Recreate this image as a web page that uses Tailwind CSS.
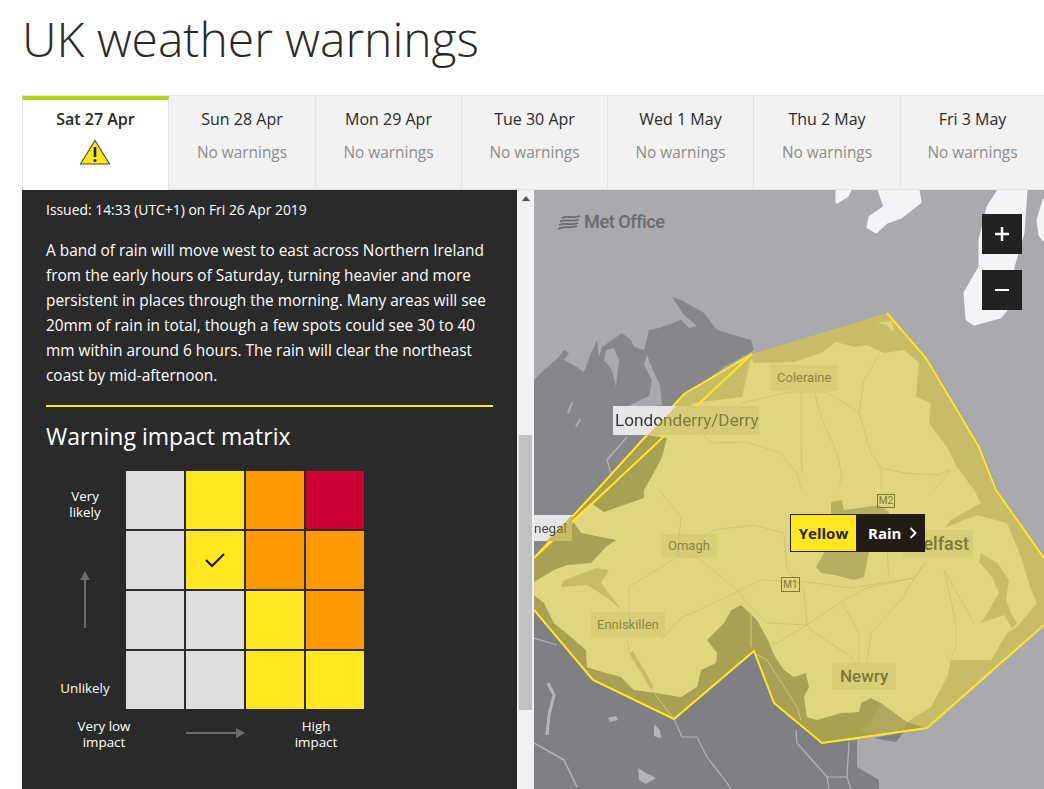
<!DOCTYPE html>
<html lang="en">
<head>
  <meta charset="UTF-8">
  <title>UK weather warnings</title>
  <script src="https://cdn.jsdelivr.net/npm/@tailwindcss/browser@4"></script>
</head>
<body class="bg-white text-[#2a2a2a] font-['Open_Sans',sans-serif] h-[789px] w-[1044px] overflow-hidden">
  <div class="pl-[22px] w-[1044px]">
    <h1 class="h-[95px] pt-[8px] text-[48px] leading-[62px] font-light text-[#2a2a2a]">UK weather warnings</h1>

    <!-- day tabs -->
    <div class="flex h-[95px] w-[1022px] border-t border-[#e2e2e2] text-[16px] leading-5 text-center">
      <div class="w-[147px] shrink-0 bg-white border-l border-r border-[#e2e2e2] border-t-[4px] border-t-[#b5d30c] pt-[9px]">
        <div class="font-semibold text-[16px]">Sat 27 Apr</div>
        <svg class="mx-auto mt-[10px] -translate-x-px" width="32" height="26" viewBox="0 0 32 26"><path d="M16 1.5 L30.5 25 H1.5 Z" fill="#ffe81f" stroke="#4a4a2a" stroke-width="1.2" stroke-linejoin="round"/><path d="M16 8 V18" stroke="#222" stroke-width="2.6"/><circle cx="16" cy="21.5" r="1.5" fill="#222"/></svg>
      </div>
      <div class="w-[147px] shrink-0 bg-[#f2f2f2] border-r border-b border-[#e2e2e2] pt-[13px]"><div>Sun 28 Apr</div><div class="mt-[14px] text-[15.4px] text-[#8c8c8c]">No warnings</div></div>
      <div class="w-[146px] shrink-0 bg-[#f2f2f2] border-r border-b border-[#e2e2e2] pt-[13px]"><div>Mon 29 Apr</div><div class="mt-[14px] text-[15.4px] text-[#8c8c8c]">No warnings</div></div>
      <div class="w-[146px] shrink-0 bg-[#f2f2f2] border-r border-b border-[#e2e2e2] pt-[13px]"><div>Tue 30 Apr</div><div class="mt-[14px] text-[15.4px] text-[#8c8c8c]">No warnings</div></div>
      <div class="w-[146px] shrink-0 bg-[#f2f2f2] border-r border-b border-[#e2e2e2] pt-[13px]"><div>Wed 1 May</div><div class="mt-[14px] text-[15.4px] text-[#8c8c8c]">No warnings</div></div>
      <div class="w-[147px] shrink-0 bg-[#f2f2f2] border-r border-b border-[#e2e2e2] pt-[13px]"><div>Thu 2 May</div><div class="mt-[14px] text-[15.4px] text-[#8c8c8c]">No warnings</div></div>
      <div class="w-[143px] shrink-0 bg-[#f2f2f2] border-b border-[#e2e2e2] pt-[13px]"><div>Fri 3 May</div><div class="mt-[14px] text-[15.4px] text-[#8c8c8c]">No warnings</div></div>
    </div>

    <div class="flex h-[599px] w-[1022px]">
      <!-- text panel -->
      <div class="w-[495px] shrink-0 bg-[#2a2a2a] text-white px-6 pt-[11px] overflow-hidden">
        <p class="text-[13.9px] leading-[18px]">Issued: 14:33 (UTC+1) on Fri 26 Apr 2019</p>
        <p class="mt-[19px] text-[15.4px] leading-[25px]">A band of rain will move west to east across Northern Ireland from the early hours of Saturday, turning heavier and more persistent in places through the morning. Many areas will see 20mm of rain in total, though a few spots could see 30 to 40 mm within around 6 hours. The rain will clear the northeast coast by mid-afternoon.</p>
        <div class="mt-[17px] h-0.5 w-[447px] bg-[#ffe81f]"></div>
        <h2 class="mt-[13px] text-[23px] leading-[32px]">Warning impact matrix</h2>
        <div class="mt-[19px] flex">
          <div class="w-[78px] mr-[2px] h-[238px] flex flex-col items-center justify-between text-[13.4px] leading-4 text-center pt-[17px] pb-[13px]">
            <span>Very<br>likely</span>
            <svg width="12" height="60" viewBox="0 0 12 60"><path d="M6 58V8" stroke="#6b6b6b" stroke-width="2"/><path d="M1 10 L6 1 L11 10Z" fill="#6b6b6b"/></svg>
            <span>Unlikely</span>
          </div>
          <div class="grid grid-cols-[repeat(4,58px)] grid-rows-[repeat(4,58px)] gap-[2px]">
            <div class="bg-[#dedede]"></div><div class="bg-[#ffe81f]"></div><div class="bg-[#ff9900]"></div><div class="bg-[#cc0033]"></div>
            <div class="bg-[#dedede]"></div>
            <div class="bg-[#ffe81f] flex items-center justify-center"><svg width="22" height="16" viewBox="0 0 22 16"><path d="M2 8 L8 14 L20 2" fill="none" stroke="#111" stroke-width="2"/></svg></div>
            <div class="bg-[#ff9900]"></div><div class="bg-[#ff9900]"></div>
            <div class="bg-[#dedede]"></div><div class="bg-[#dedede]"></div><div class="bg-[#ffe81f]"></div><div class="bg-[#ff9900]"></div>
            <div class="bg-[#dedede]"></div><div class="bg-[#dedede]"></div><div class="bg-[#ffe81f]"></div><div class="bg-[#ffe81f]"></div>
          </div>
        </div>
        <div class="mt-[9px] flex text-[13.4px] leading-4 text-center">
          <span class="w-[116px]">Very low<br>impact</span>
          <svg class="mt-[9px] ml-[24px]" width="60" height="12" viewBox="0 0 60 12"><path d="M0 6H50" stroke="#6b6b6b" stroke-width="2"/><path d="M50 1 L59 6 L50 11Z" fill="#6b6b6b"/></svg>
          <span class="w-[90px] ml-[25px]">High<br>impact</span>
        </div>
      </div>

      <!-- scrollbar -->
      <div class="w-[17px] shrink-0 bg-[#f1f1f1] flex flex-col items-center">
        <svg class="mt-[6px]" width="8" height="5" viewBox="0 0 8 5"><path d="M0 5 L4 0 L8 5Z" fill="#505050"/></svg>
        <div class="mt-[234px] h-[275px] w-[13px] bg-[#c1c1c1]"></div>
      </div>

      <!-- map -->
      <div class="relative w-[510px] h-[599px] shrink-0 overflow-hidden bg-[#a9a9ae]">
        <svg class="absolute inset-0" width="510" height="599" viewBox="0 0 510 599">
          <!-- Donegal, north west -->
          <path d="M0 190 L10 180 L25 167 L30 160 L35 163 L30 170 L43 177 L50 182 L57 163 L63 150 L65 167 L68 157 L88 143 L97 150 L100 157 L110 160 L115 140 L125 138 L147 130 L155 138 L163 136 L150 125 L138 107 L147 110 L170 123 L183 140 L217 150 L220 160 L215 163 L190 177 L177 187 L150 204 L113 245 L63 300 L0 368Z" fill="#87878b"/>
          <path d="M72 160 L80 158 L85 170 L82 197 L78 180 L70 170Z M113 165 L118 178 L126 195 L128 215 L120 216 L100 225 L94 216 L115 206 L118 190 L110 175Z M33 222 L38 211 L39 213 L35 224Z M41 236 L46 228 L47 230 L43 237Z" fill="#a9a9ae"/>
          <path d="M93 247 L73 270 L78 287" fill="none" stroke="#b5b5b9" stroke-width="1.2"/>
          <!-- land south of the warning -->
          <path d="M0 420 L59 490 L140 529 L220 461 L240 513 L288 553 L323 550 L323 577 L345 590 L345 599 L0 599Z M340 548 L370 542 L362 552 L350 550Z" fill="#808084"/>
          <g fill="none" stroke="#b5b5b9">
            <path d="M140 529 L148 547 L163 547 L173 567 L193 593 L197 599" stroke-width="1.2"/>
            <path d="M262 540 L263 553 L293 587 L313 587 L315 552 M293 587 L295 599 M313 587 L317 599" stroke-width="1.2"/>
            <path d="M14 493 L20 505 L15 525 L13 545" stroke-width="3"/>
            <path d="M0 553 L30 570 L43 597" stroke-width="1.5"/>
            <path d="M0 448 L23 455" stroke-width="1.2"/>
          </g>
          <path d="M74 528 L82 526 L84 530 L76 532Z M120 534 L126 540 L127 548 L120 546Z M104 578 L112 583 L122 588 L112 594 L105 590Z" fill="#b5b5b9"/>
          <!-- Scottish islands -->
          <g fill="#f4f4f6" stroke="#f4f4f6" stroke-width="3" stroke-linejoin="round">
            <path d="M303 0 L303 12 L313 6 L316 0Z M345 0 L351 17 L336 27 L334 37 L342 42 L353 32 L367 27 L386 12 L384 0Z"/>
            <path d="M465 0 L454 17 L446 50 L446 77 L431 103 L433 129 L440 134 L466 127 L472 120 L479 77 L489 43 L492 0Z"/>
            <path d="M510 10 L504 30 L506 45 L510 50Z"/>
          </g>
          <!-- faint shadow along the warning edge -->
          <path d="M354 124 L393 169 L446 258 L463 301 L511 369" fill="none" stroke="#97979c" stroke-width="2"/>
          <!-- warning area: sea tint first -->
          <path d="M353 123 L392 168 L445 257 L462 300 L510 368 L510 435 L393 538 L288 553 L240 513 L220 461 L140 529 L59 490 L0 420 L0 368 L63 300 L150 204 L218 164Z" fill="#c8bc68"/>
          <!-- border country, darker strip to the south -->
          <path d="M0 405 L10 413 L20 433 L37 447 L52 460 L53 477 L62 480 L87 487 L100 500 L123 503 L147 507 L163 497 L167 480 L182 473 L183 463 L173 450 L190 433 L197 420 L207 415 L223 430 L235 452 L240 465 L250 480 L260 487 L272 483 L275 497 L270 507 L273 527 L283 530 L307 523 L325 522 L327 513 L337 508 L347 513 L373 532 L393 538 L288 553 L240 513 L220 461 L140 529 L59 490 L0 420Z" fill="#a8a052"/>
          <path d="M347 513 L373 532 L370 541 L345 545 L325 540 L335 535Z" fill="#b0a75a"/>
          <!-- land under the warning -->
          <path d="M217 168 L220 173 L260 172 L287 163 L302 152 L320 157 L333 155 L350 163 L370 160 L385 173 L382 207 L397 213 L395 233 L413 257 L423 277 L440 300 L447 313 L417 330 L410 338 L443 325 L473 333 L487 367 L497 400 L503 413 L483 437 L473 443 L457 470 L417 470 L413 487 L397 517 L373 532 L347 513 L337 508 L327 513 L325 522 L307 523 L283 530 L273 527 L270 507 L275 497 L272 483 L260 487 L250 480 L240 465 L235 452 L223 430 L207 415 L197 420 L190 433 L173 450 L183 463 L182 473 L167 480 L163 497 L147 507 L123 503 L100 500 L87 487 L62 480 L53 477 L52 460 L37 447 L20 433 L10 413 L0 405 L0 368 L63 300 L113 245 L133 235 L160 213 L208 207Z" fill="#e1d680"/>
          <path d="M343 133 L358 131 L360 142 L352 135Z" fill="#e1d680"/>
          <!-- hills -->
          <path d="M113 245 L133 248 L128 267 L123 277 L110 300 L110 308 L70 322 L57 313 L38 330 L47 343 L82 350 L72 357 L57 373 L33 375 L20 380 L0 392 L0 368 L63 300Z" fill="#a8a052"/>
          <path d="M297 312 L308 310 L310 320 L325 318 L345 315 L355 322 L355 330 L345 355 L335 362 L330 387 L320 390 L300 385 L287 383 L282 377 L290 363 L298 345 L297 325Z" fill="#b8ae60"/>
          <!-- loughs -->
          <path d="M447 363 L463 373 L475 390 L472 410 L477 423 L483 433 L478 438 L470 425 L447 433 L455 420 L465 403 L458 387 L445 372Z" fill="#c8bc68"/>
          <path d="M30 390 L63 378 L75 380 L67 393 L80 410 L88 420 L72 407 L53 395 L27 397Z" fill="#c8bc68"/>
          <path d="M97 462 L108 480 L118 498" fill="none" stroke="#c8bc68" stroke-width="4"/>
          <!-- roads -->
          <g fill="none" stroke="#d0c574" stroke-width="1">
            <path d="M125 300 L147 327 L143 367 L163 367 L203 400 L213 413 L233 433 L273 435 L315 407 L333 398 L380 388 L393 372"/>
            <path d="M95 423 L95 397 L143 367 L180 340 L220 335 L250 343 L253 380 L270 400 L273 435 L277 440 L317 467 L323 477"/>
            <path d="M127 450 L147 428 L203 402 L227 390 L273 392 L317 398 L380 388"/>
            <path d="M308 413 L325 443 L325 473 M333 473 L337 443 L367 410 L390 373 M410 380 L422 433 L422 457 L415 473 M410 380 L440 433"/>
            <path d="M353 360 L355 387 M273 435 L243 453 L235 453 M217 423 L217 457 M220 463 L233 470 L263 517 L267 530 M93 450 L97 467 L123 507 L140 529"/>
            <path d="M167 243 L177 253 L213 252 L247 263 L257 277 L263 283 L267 300 M267 200 L267 247 L268 283"/>
            <path d="M280 200 L287 227 L303 263 L308 287 L303 300 M207 213 L257 202 L293 202 L325 223 L337 263 L347 277 L347 300"/>
            <path d="M325 223 L330 190 L345 165 M343 277 L370 283 L403 285 L417 280 L400 300"/>
          </g>
          <!-- warning outline -->
          <path d="M353 123 L392 168 L445 257 L462 300 L510 368 M510 435 L393 538 L288 553 L240 513 L220 461 L140 529 L59 490 L0 420 M0 368 L63 300 L150 204 L218 164Z" fill="none" stroke="#ffe81f" stroke-width="2"/>
        </svg>

        <!-- Met Office logo -->
        <div class="absolute left-[24px] top-[20px] flex items-center gap-[3px] text-[#6a6a6e]">
          <svg width="23" height="15" viewBox="0 0 23 15" fill="none" stroke="#6a6a6e" stroke-width="1.8"><path d="M4 3C9 0 13 4 22 1M2 6.5C8 3.5 13 7.5 21 4.5M1 10C7 7 12 11 20 8M0 14C6 10 11 14 19 11"/></svg>
          <span class="font-['Roboto',sans-serif] text-[18.2px] font-medium leading-6 tracking-[-0.5px]">Met Office</span>
        </div>

        <!-- zoom buttons -->
        <div class="absolute left-[448px] top-[24px] w-10 h-10 bg-[#222] text-white flex items-center justify-center">
          <svg width="14" height="14" viewBox="0 0 14 14"><path d="M7 0V14M0 7H14" stroke="#fff" stroke-width="2.4"/></svg>
        </div>
        <div class="absolute left-[448px] top-[80px] w-10 h-10 bg-[#222] text-white flex items-center justify-center">
          <svg width="14" height="14" viewBox="0 0 14 14"><path d="M0 7H14" stroke="#fff" stroke-width="2"/></svg>
        </div>

        <!-- place labels -->
        <div class="font-['Roboto',sans-serif]">
          <div class="absolute left-[79px] top-[216px] w-[146px] h-[29px] bg-[linear-gradient(135deg,#e6e6e8_36%,#d6cb76_36%)]">
            <span class="block w-[146px] h-[29px] px-[2px] text-[17.2px] leading-[29px] whitespace-nowrap text-transparent bg-clip-text bg-[linear-gradient(135deg,#333_36%,#7f7734_36%)]">Londonderry/Derry</span>
          </div>
          <span class="absolute left-[236px] top-[175px] h-[26px] px-[7px] bg-[#c8bc68]/30 text-[13px] leading-[26px] text-[#8e853f]">Coleraine</span>
          <div class="absolute left-0 top-[325px] w-[38px] h-[26px] bg-[linear-gradient(135deg,#e6e6e8_60%,#c8bc68_60%)]">
            <span class="block w-[38px] h-[26px] text-[13.5px] leading-[26px] whitespace-nowrap text-transparent bg-clip-text bg-[linear-gradient(135deg,#444_64%,#7f7734_64%)]">negal</span>
          </div>
          <span class="absolute left-[127px] top-[344px] h-[23px] px-[7px] bg-[#c8bc68]/30 text-[13px] leading-[23px] text-[#8e853f]">Omagh</span>
          <span class="absolute left-[57px] top-[422px] h-[25px] px-[6px] bg-[#c8bc68]/30 text-[13px] leading-[25px] text-[#8e853f]">Enniskillen</span>
          <span class="absolute left-[298px] top-[473px] h-[27px] px-[8px] bg-[#c8bc68]/30 text-[17px] leading-[27px] font-medium text-[#7f7734]">Newry</span>
          <span class="absolute left-[369px] top-[340px] h-[27px] w-[70px] bg-[#c8bc68]/30 text-[18px] leading-[27px] font-medium text-[#7f7734] text-right pr-1">Belfast</span>
          <span class="absolute left-[343px] top-[304px] w-[18px] h-[14px] border border-[#7f7734] text-[10px] leading-[12px] text-center text-[#7f7734]">M2</span>
          <span class="absolute left-[247px] top-[387px] w-[19px] h-[15px] border border-[#7f7734] text-[10px] leading-[13px] text-center text-[#7f7734]">M1</span>
        </div>

        <!-- warning flag -->
        <div class="absolute left-[256px] top-[324px] h-[38px] flex border border-[#221c14] text-[15px] font-bold leading-[36px]">
          <span class="w-[65px] bg-[#ffe81f] text-[#2a2414] text-center">Yellow</span>
          <span class="w-[68px] bg-[#221c14] text-white pl-3 flex items-center gap-2">Rain
            <svg width="8" height="12" viewBox="0 0 8 12"><path d="M1.5 1L6.5 6L1.5 11" fill="none" stroke="#fff" stroke-width="1.8"/></svg>
          </span>
        </div>
      </div>
    </div>
  </div>
</body>
</html>
